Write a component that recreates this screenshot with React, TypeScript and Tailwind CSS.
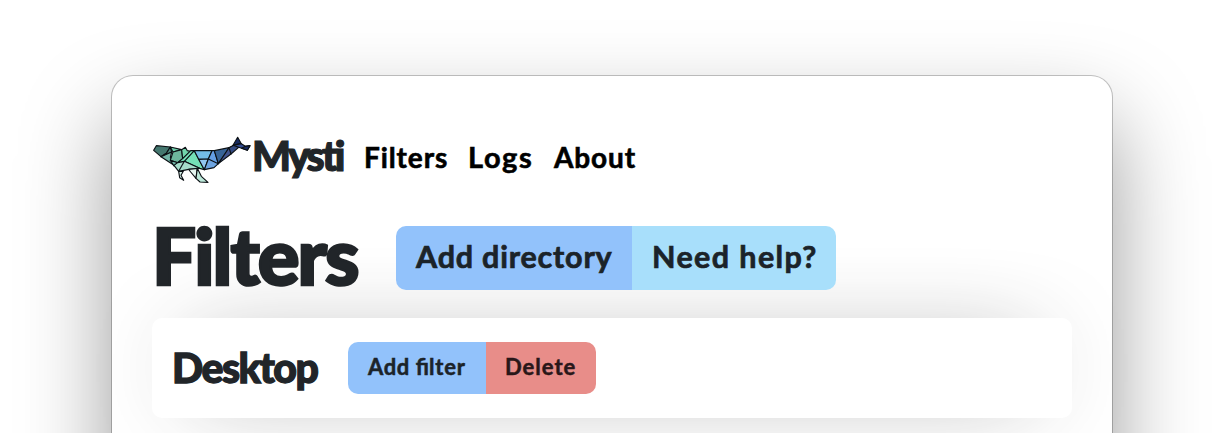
import React from "react";

function Whale() {
  return (
    <svg
      viewBox="21 15 300 150"
      className="h-[50px] w-[100px] shrink-0"
      stroke="#0b1014"
      strokeWidth="3.4"
      strokeLinejoin="round"
      aria-hidden="true"
    >
      <path d="M34 47 76 51 64 70 48 80 26 61Z" fill="#44776f" />
      <path d="M76 51 80 66 48 80 64 70Z" fill="#4f8c82" />
      <path d="M48 80 80 66 76 82 87 106Z" fill="#72b3a6" />
      <path d="M76 51 110 59 84 66Z" fill="#6fd0ac" />
      <path d="M84 66 110 59 113 86 98 98 76 91Z" fill="#6db59c" />
      <path d="M76 91 98 98 87 108Z" fill="#72b3a6" />
      <path d="M110 59 121 52 127 62 137 64 113 86Z" fill="#72d6ac" />
      <path d="M137 62 148 62 120 95 98 98 113 86Z" fill="#74dfb6" />
      <path d="M148 62 178 119 164 115 118 94Z" fill="#74dfb6" />
      <path d="M98 98 118 94 164 115 131 118 101 124 87 106Z" fill="#a5dcca" />
      <path d="M118 94 101 124" fill="none" />
      <path d="M148 62 201 62 190 87 161 88Z" fill="#73bce5" />
      <path d="M161 88 190 87 178 119Z" fill="#91c6ef" />
      <path d="M190 87 220 90 220 101 207 113 178 119Z" fill="#6da4e0" />
      <path d="M201 62 208 62 220 101 190 87Z" fill="#649ee4" />
      <path d="M208 62 252 53 240 74 220 101Z" fill="#386497" />
      <path d="M252 53 264 47 258 72 220 101Z" fill="#41548d" />
      <path d="M252 53 272 43 281 52 258 72Z" fill="#344a82" />
      <path d="M264 46 278 22 289 41 273 44Z" fill="#172a61" />
      <path d="M264 46 289 41 301 49 315 47 307 61 281 52Z" fill="#344c93" />
      <path d="M301 49 315 47 307 61 290 55Z" fill="#172a61" />
      <path d="M101 124 115 124 108 136 116 151 104 143Z" fill="#d3eee5" />
      <path d="M131 118 157 115 153 145 137 126Z" fill="#e5f6f0" />
      <path d="M157 115 169 139 189 157 165 156 153 145Z" fill="#bce8d9" />
    </svg>
  );
}

export default function App() {
  return (
    <div className="h-[433px] overflow-hidden bg-white px-28 pt-[76px] font-['Lato','Liberation_Sans',sans-serif] text-[#212529]">
      <main className="h-[700px] rounded-[21px] bg-white px-10 pt-[59px] shadow-[0_0_0_1px_rgba(0,0,0,0.22),0_44px_90px_rgba(0,0,0,0.4)]">
        <header className="flex h-[50px] items-center whitespace-nowrap">
          <Whale />
          <span className="mt-[-9px] w-28 text-[41px] leading-none font-black tracking-[-2.7px] [-webkit-text-stroke:1.2px_#212529]">Mysti</span>
          <nav className="flex items-baseline text-[28px] leading-none font-bold text-black [-webkit-text-stroke:0.6px_#000]">
            <a className="mt-[-8px] w-26 tracking-[0.9px]">Filters</a>
            <a className="mt-[-8px] w-[86px] text-[29px] tracking-[1.6px]">Logs</a>
            <a className="mt-[-8px] tracking-[0.9px]">About</a>
          </nav>
        </header>
        <section className="mt-[41px] flex h-16 items-center whitespace-nowrap">
          <h1 className="-mt-1.5 w-61 text-[78px] leading-none font-black tracking-[-1.9px] [-webkit-text-stroke:2.6px_#212529]">Filters</h1>
          <div className="flex h-16 overflow-hidden rounded-[10px] text-[30.5px] leading-none font-bold text-[#1b2329] [-webkit-text-stroke:0.7px_#1b2329]">
            <button className="w-59 bg-[#92c2fb] pb-[3px] pl-5 text-left tracking-[0.8px]">Add directory</button>
            <button className="w-51 bg-[#a8dffb] pb-[3px] pl-5 text-left tracking-[1.4px]">Need help?</button>
          </div>
        </section>
        <section className="mt-7 flex h-[100px] items-center rounded-[10px] bg-white pl-5 whitespace-nowrap shadow-[0_0_92px_-40px_rgba(0,0,0,0.85)]">
          <h2 className="-mt-0.5 w-44 text-[41px] leading-none font-black tracking-[-1.5px] [-webkit-text-stroke:1.3px_#212529]">Desktop</h2>
          <div className="flex h-[52px] overflow-hidden rounded-[10px] text-[22px] leading-none font-bold">
            <button className="w-[138px] bg-[#92c2fb] pb-[3px] pl-5 text-left text-[#1b2329] [-webkit-text-stroke:0.5px_#1b2329]">
              <span className="tracking-[0.6px]">Add </span>
              <span>fi</span>
              <span className="tracking-[0.8px]">lter</span>
            </button>
            <button className="w-[110px] bg-[#e88d89] pb-[3px] pl-[19px] text-left tracking-[1px] text-[#291719] [-webkit-text-stroke:0.5px_#291719]">Delete</button>
          </div>
        </section>
      </main>
    </div>
  );
}
